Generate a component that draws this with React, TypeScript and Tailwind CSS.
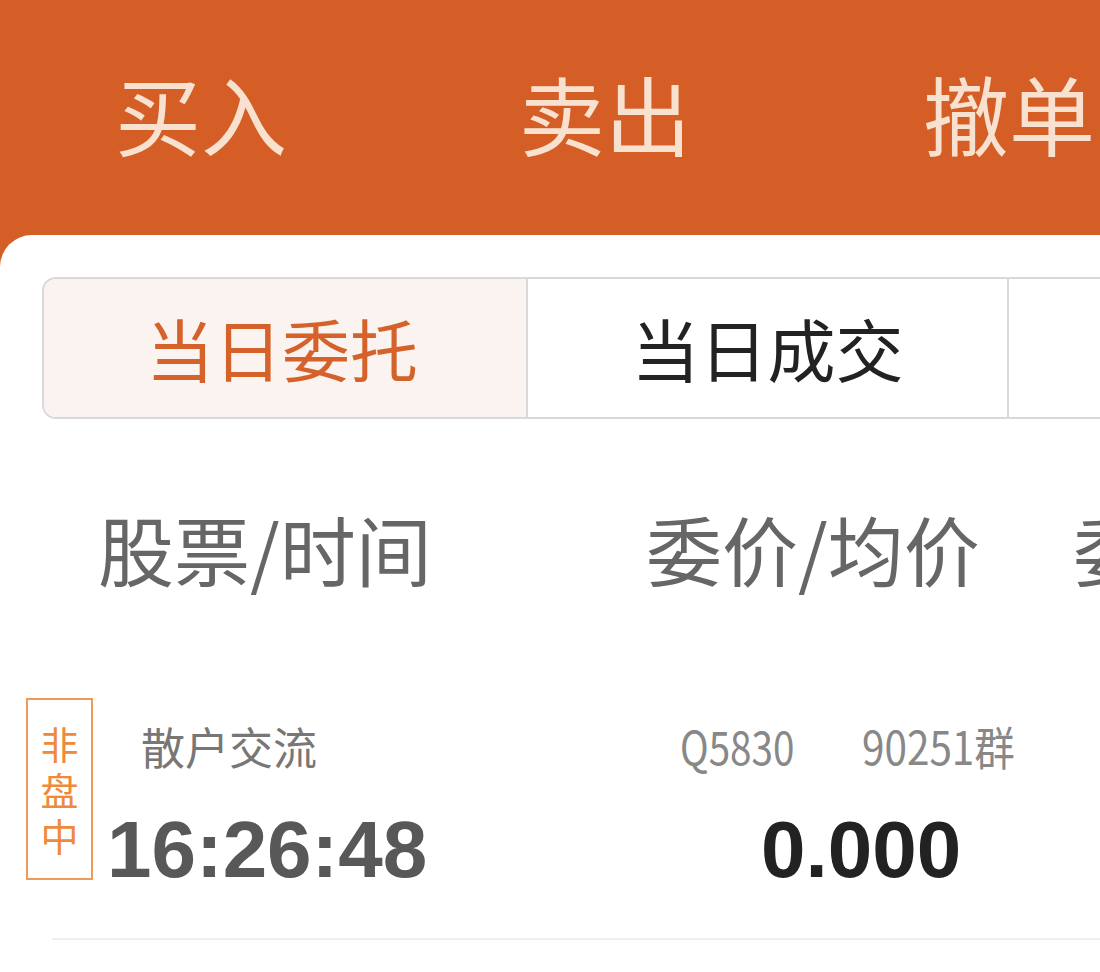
import React from "react";

const actions = ["买入", "卖出", "撤单"];

export default function App() {
  return (
    <div className="w-[1100px] h-[972px] overflow-hidden bg-[#d55e27] font-['Noto_Sans_CJK_SC',sans-serif]">
      {/* Top action bar */}
      <header className="h-[235px] flex gap-[232px] pl-[115px] pt-[70px] whitespace-nowrap overflow-hidden">
        {actions.map((a) => (
          <span key={a} className="text-[86px] leading-none text-[#f8e1cf] shrink-0">
            {a}
          </span>
        ))}
      </header>

      <main className="h-[737px] bg-white rounded-tl-[32px] overflow-hidden">
        {/* Segmented tabs */}
        <div className="ml-[42px] pt-[42px]">
          <div className="flex h-[142px] w-[1100px] border-2 border-[#d9d8dc] rounded-l-[14px] overflow-hidden">
            <div className="w-[484px] shrink-0 bg-[#fbf3ef] flex items-center justify-center border-r-2 border-[#d9d8dc]">
              <span className="text-[68px] leading-none text-[#d4622a] -translate-x-[3px]">当日委托</span>
            </div>
            <div className="w-[481px] shrink-0 flex items-center justify-center border-r-2 border-[#d9d8dc]">
              <span className="text-[68px] leading-none text-[#222]">当日成交</span>
            </div>
            <div className="flex-1" />
          </div>
        </div>

        {/* Column titles */}
        <div className="mt-[91px] flex whitespace-nowrap text-[76px] leading-none text-[#666]">
          <span className="w-[548px] pl-[98px] shrink-0 box-content">股票/时间</span>
          <span className="w-[427px] shrink-0">委价/均价</span>
          <span className="shrink-0">委</span>
        </div>

        {/* Order row */}
        <div className="mt-[112px] flex items-start">
          <div className="ml-[26px] w-[67px] h-[182px] shrink-0 border-2 border-[#ee9a58] flex flex-col items-center justify-center gap-[8px] text-[38px] leading-none text-[#ee8a3a]">
            <span>非</span>
            <span>盘</span>
            <span>中</span>
          </div>
          <div className="w-[587px] shrink-0 pt-[26px]">
            <div className="pl-[48px] text-[44px] leading-none text-[#777]">散户交流</div>
            <div className="mt-[42px] pl-[14px] font-['Liberation_Sans',sans-serif] font-bold text-[80px] leading-none text-[#585858]">
              16:26:48
            </div>
          </div>
          <div className="pt-[24px]">
            <div className="flex text-[46px] leading-none text-[#888] whitespace-nowrap">
              <span className="w-[182px] shrink-0">
                <span className="inline-block scale-x-[0.84] origin-left">Q5830</span>
              </span>
              <span className="inline-block scale-x-[0.88] origin-left">90251群</span>
            </div>
            <div className="mt-[42px] pl-[81px] font-['Liberation_Sans',sans-serif] font-bold text-[80px] leading-none text-[#222]">
              0.000
            </div>
          </div>
        </div>

        <div className="mt-[48px] ml-[52px] h-[2px] bg-[#efefef]" />
      </main>
    </div>
  );
}
